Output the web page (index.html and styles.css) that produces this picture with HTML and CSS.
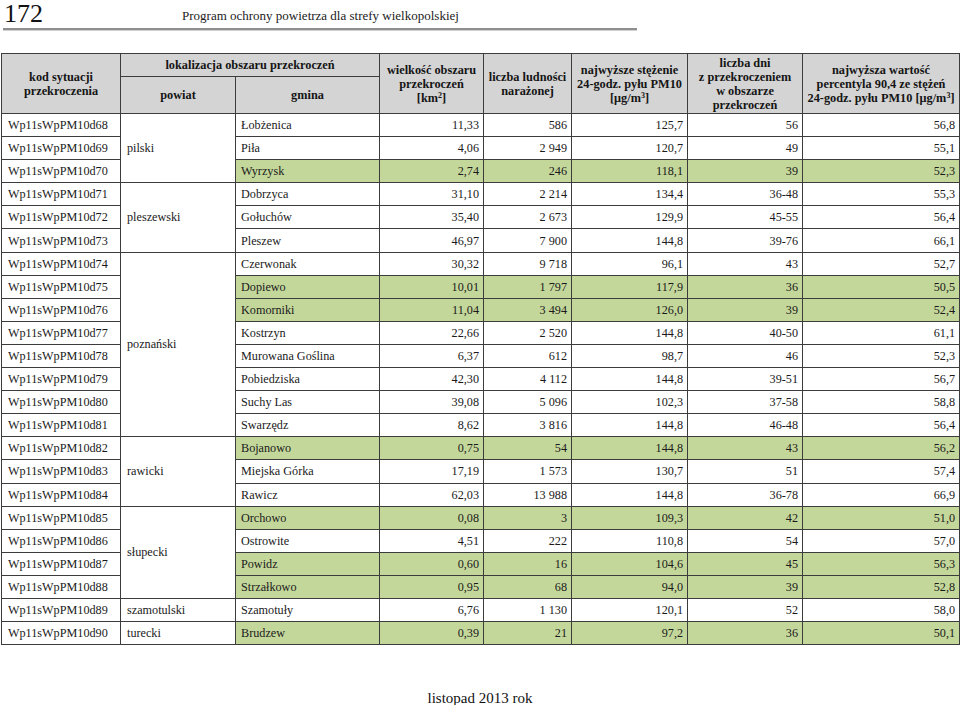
FILE: index.html
```html
<!DOCTYPE html>
<html lang="pl">
<head>
<meta charset="utf-8">
<title>Program ochrony powietrza</title>
<link rel="stylesheet" href="styles.css">
</head>
<body>
<header class="page-head">
  <div class="page-num">172</div>
  <div class="page-title">Program ochrony powietrza dla strefy wielkopolskiej</div>
</header>
<div class="rule"></div>
<table class="data">
  <colgroup>
    <col class="c1"><col class="c2"><col class="c3"><col class="c4"><col class="c5"><col class="c6"><col class="c7"><col class="c8">
  </colgroup>
  <thead>
    <tr class="h1">
      <th rowspan="2">kod sytuacji<br>przekroczenia</th>
      <th colspan="2">lokalizacja obszaru przekroczeń</th>
      <th rowspan="2">wielkość obszaru<br>przekroczeń<br>[km<sup>2</sup>]</th>
      <th rowspan="2">liczba ludności<br>narażonej</th>
      <th rowspan="2">najwyższe stężenie<br>24-godz. pyłu PM10<br>[μg/m<sup>3</sup>]</th>
      <th rowspan="2">liczba dni<br>z przekroczeniem<br>w obszarze<br>przekroczeń</th>
      <th rowspan="2">najwyższa wartość<br>percentyla 90,4 ze stężeń<br>24-godz. pyłu PM10 [μg/m<sup>3</sup>]</th>
    </tr>
    <tr class="h2">
      <th>powiat</th>
      <th>gmina</th>
    </tr>
  </thead>
  <tbody>
    <tr><td class="code">Wp11sWpPM10d68</td><td class="pow" rowspan="3">pilski</td><td>Łobżenica</td><td class="num">11,33</td><td class="num">586</td><td class="num">125,7</td><td class="num">56</td><td class="num">56,8</td></tr>
    <tr><td class="code">Wp11sWpPM10d69</td><td>Piła</td><td class="num">4,06</td><td class="num">2 949</td><td class="num">120,7</td><td class="num">49</td><td class="num">55,1</td></tr>
    <tr class="hl"><td class="code">Wp11sWpPM10d70</td><td>Wyrzysk</td><td class="num">2,74</td><td class="num">246</td><td class="num">118,1</td><td class="num">39</td><td class="num">52,3</td></tr>
    <tr><td class="code">Wp11sWpPM10d71</td><td class="pow" rowspan="3">pleszewski</td><td>Dobrzyca</td><td class="num">31,10</td><td class="num">2 214</td><td class="num">134,4</td><td class="num">36-48</td><td class="num">55,3</td></tr>
    <tr><td class="code">Wp11sWpPM10d72</td><td>Gołuchów</td><td class="num">35,40</td><td class="num">2 673</td><td class="num">129,9</td><td class="num">45-55</td><td class="num">56,4</td></tr>
    <tr><td class="code">Wp11sWpPM10d73</td><td>Pleszew</td><td class="num">46,97</td><td class="num">7 900</td><td class="num">144,8</td><td class="num">39-76</td><td class="num">66,1</td></tr>
    <tr><td class="code">Wp11sWpPM10d74</td><td class="pow" rowspan="8">poznański</td><td>Czerwonak</td><td class="num">30,32</td><td class="num">9 718</td><td class="num">96,1</td><td class="num">43</td><td class="num">52,7</td></tr>
    <tr class="hl"><td class="code">Wp11sWpPM10d75</td><td>Dopiewo</td><td class="num">10,01</td><td class="num">1 797</td><td class="num">117,9</td><td class="num">36</td><td class="num">50,5</td></tr>
    <tr class="hl"><td class="code">Wp11sWpPM10d76</td><td>Komorniki</td><td class="num">11,04</td><td class="num">3 494</td><td class="num">126,0</td><td class="num">39</td><td class="num">52,4</td></tr>
    <tr><td class="code">Wp11sWpPM10d77</td><td>Kostrzyn</td><td class="num">22,66</td><td class="num">2 520</td><td class="num">144,8</td><td class="num">40-50</td><td class="num">61,1</td></tr>
    <tr><td class="code">Wp11sWpPM10d78</td><td>Murowana Goślina</td><td class="num">6,37</td><td class="num">612</td><td class="num">98,7</td><td class="num">46</td><td class="num">52,3</td></tr>
    <tr><td class="code">Wp11sWpPM10d79</td><td>Pobiedziska</td><td class="num">42,30</td><td class="num">4 112</td><td class="num">144,8</td><td class="num">39-51</td><td class="num">56,7</td></tr>
    <tr><td class="code">Wp11sWpPM10d80</td><td>Suchy Las</td><td class="num">39,08</td><td class="num">5 096</td><td class="num">102,3</td><td class="num">37-58</td><td class="num">58,8</td></tr>
    <tr><td class="code">Wp11sWpPM10d81</td><td>Swarzędz</td><td class="num">8,62</td><td class="num">3 816</td><td class="num">144,8</td><td class="num">46-48</td><td class="num">56,4</td></tr>
    <tr class="hl"><td class="code">Wp11sWpPM10d82</td><td class="pow" rowspan="3">rawicki</td><td>Bojanowo</td><td class="num">0,75</td><td class="num">54</td><td class="num">144,8</td><td class="num">43</td><td class="num">56,2</td></tr>
    <tr><td class="code">Wp11sWpPM10d83</td><td>Miejska Górka</td><td class="num">17,19</td><td class="num">1 573</td><td class="num">130,7</td><td class="num">51</td><td class="num">57,4</td></tr>
    <tr><td class="code">Wp11sWpPM10d84</td><td>Rawicz</td><td class="num">62,03</td><td class="num">13 988</td><td class="num">144,8</td><td class="num">36-78</td><td class="num">66,9</td></tr>
    <tr class="hl"><td class="code">Wp11sWpPM10d85</td><td class="pow" rowspan="4">słupecki</td><td>Orchowo</td><td class="num">0,08</td><td class="num">3</td><td class="num">109,3</td><td class="num">42</td><td class="num">51,0</td></tr>
    <tr><td class="code">Wp11sWpPM10d86</td><td>Ostrowite</td><td class="num">4,51</td><td class="num">222</td><td class="num">110,8</td><td class="num">54</td><td class="num">57,0</td></tr>
    <tr class="hl"><td class="code">Wp11sWpPM10d87</td><td>Powidz</td><td class="num">0,60</td><td class="num">16</td><td class="num">104,6</td><td class="num">45</td><td class="num">56,3</td></tr>
    <tr class="hl"><td class="code">Wp11sWpPM10d88</td><td>Strzałkowo</td><td class="num">0,95</td><td class="num">68</td><td class="num">94,0</td><td class="num">39</td><td class="num">52,8</td></tr>
    <tr><td class="code">Wp11sWpPM10d89</td><td class="pow">szamotulski</td><td>Szamotuły</td><td class="num">6,76</td><td class="num">1 130</td><td class="num">120,1</td><td class="num">52</td><td class="num">58,0</td></tr>
    <tr class="hl"><td class="code">Wp11sWpPM10d90</td><td class="pow">turecki</td><td>Brudzew</td><td class="num">0,39</td><td class="num">21</td><td class="num">97,2</td><td class="num">36</td><td class="num">50,1</td></tr>
  </tbody>
</table>
<footer class="page-foot">listopad 2013 rok</footer>
</body>
</html>
```

FILE: styles.css
```css
html, body {
  margin: 0;
  padding: 0;
  background: #ffffff;
}
body {
  width: 960px;
  height: 705px;
  overflow: hidden;
  font-family: "Liberation Serif", "Times New Roman", serif;
  color: #1a1a1a;
}
.page-head {
  display: flex;
  align-items: flex-end;
  height: 27px;
  padding-left: 4px;
}
.page-num {
  font-size: 26px;
  line-height: 26px;
  width: 178px;
  color: #111;
}
.page-title {
  font-size: 13px;
  line-height: 16px;
  padding-bottom: 3px;
  color: #222;
}
.rule {
  margin-left: 3px;
  width: 634px;
  height: 2px;
  background: #8f8f8f;
  margin-top: 1px;
  border-bottom: 1px solid #d0d0d0;
}
.data {
  margin-top: 22px;
  margin-left: 1px;
  border-collapse: collapse;
  table-layout: fixed;
  width: 958px;
  font-size: 12.2px;
}
.c1 { width: 119px; }
.c2 { width: 115px; }
.c3 { width: 144px; }
.c4 { width: 104px; }
.c5 { width: 88px; }
.c6 { width: 116px; }
.c7 { width: 115px; }
.c8 { width: 157px; }
.data th, .data td {
  border: 1px solid #3c3c3c;
  padding: 0 5px;
  vertical-align: middle;
}
.data th {
  background: #d4d4d4;
  font-weight: bold;
  font-size: 12.3px;
  line-height: 14px;
  text-align: center;
  color: #151515;
  white-space: nowrap;
  padding: 0 1px;
}
.data th sup {
  font-size: 8px;
  line-height: 0;
  vertical-align: 4px;
}
.h1 { height: 23px; }
.h2 { height: 37px; }
.data tbody tr { height: 23.1px; }
.data td {
  line-height: 14px;
  white-space: nowrap;
}
.data td.code { padding-left: 6px; }
.data td.pow { padding-left: 6px; background: #ffffff; }
.data td.num { text-align: right; padding-right: 4px; }
.hl td { background: #c4d79b; }
.hl td.code { background: #ffffff; }
.data tbody td.pow { background: #ffffff; }
.page-foot {
  margin-top: 44px;
  text-align: center;
  font-size: 15px;
  line-height: 18px;
  color: #111;
}
```
